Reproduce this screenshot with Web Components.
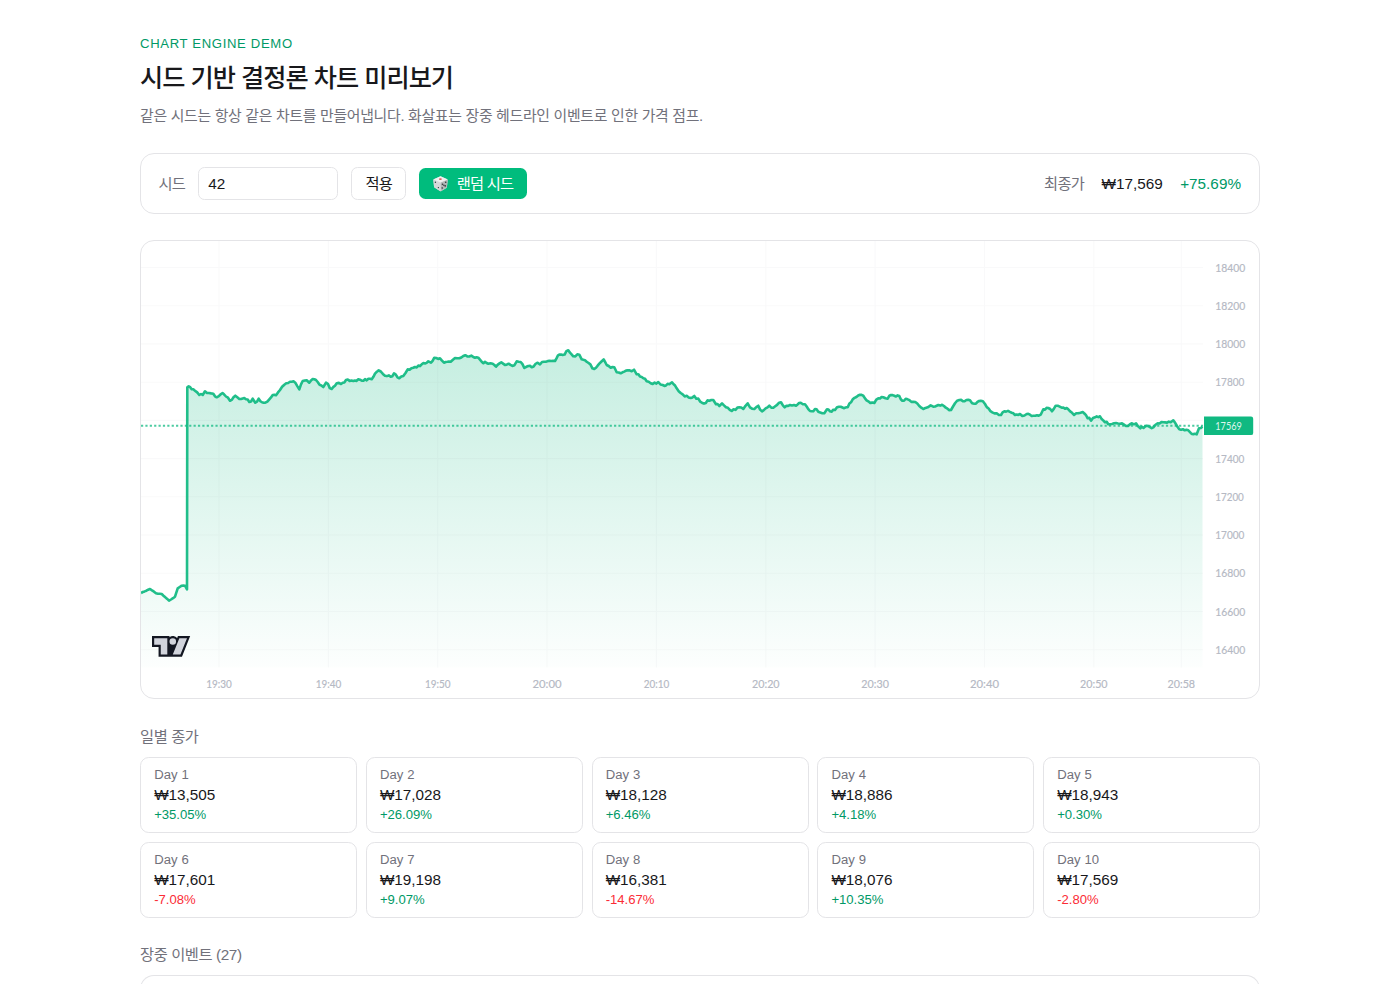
<!DOCTYPE html>
<html lang="ko">
<head>
<meta charset="utf-8">
<title>시드 기반 결정론 차트 미리보기</title>
<style>
    html {
        font-size: 17.5px;
    }

    body {
        margin: 0;
        background: #fff;
        color: #18181b;
        font-family: "Liberation Sans", "Noto Sans CJK KR", sans-serif;
        height: 984px;
        overflow: hidden;
        --line: #e4e4e7;
        --muted: #71717b;
        --up: #009966;
        --down: #fb2c36;
        --accent: #00bc7d;
    }
</style>
</head>
<body>
<chart-demo></chart-demo>

<script>

function attach(element, markup) {
    const template = document.createElement("template");
    template.innerHTML = markup;
    element.attachShadow({mode: "open"}).appendChild(template.content.cloneNode(true));
}

/* rounded, bordered box */

class PanelCard extends HTMLElement {
    constructor() {
        super();
        attach(this, `<style>
            :host {
                display: block;
                box-sizing: border-box;
                border: 1px solid var(--line);
                border-radius: var(--panel-radius, 14px);
                background: #fff;
                overflow: hidden;
            }
        </style><slot></slot>`);
    }
}

class PageHeading extends HTMLElement {
    constructor() {
        super();
        attach(this, `<style>
            :host { display: block; white-space: nowrap; }
            .eyebrow {
                font-size: 0.75rem;
                line-height: 1rem;
                letter-spacing: 0.66px;
                color: var(--up);
            }
            h1 {
                margin: 0.5rem 0 0;
                font-size: 25.2px;
                line-height: 2rem;
                font-weight: 500;
                letter-spacing: -0.95px;
            }
            p {
                margin: 9.5px 0 -0.75px;
                font-size: 14.9px;
                line-height: 1.25rem;
                letter-spacing: -0.3px;
                color: var(--muted);
            }
        </style>
        <div class="eyebrow"><slot name="eyebrow"></slot></div>
        <h1><slot name="title"></slot></h1>
        <p><slot></slot></p>`);
    }
}

class SectionTitle extends HTMLElement {
    constructor() {
        super();
        attach(this, `<style>
            :host {
                display: block;
                margin-bottom: 0.5rem;
                font-size: 0.875rem;
                line-height: 1.25rem;
                letter-spacing: -0.4px;
                color: var(--muted);
                white-space: nowrap;
            }
        </style><slot></slot>`);
    }
}

class SeedToolbar extends HTMLElement {
    constructor() {
        super();
        attach(this, `<style>
            :host {
                display: flex;
                align-items: center;
                gap: 0.75rem;
                height: 59px;
                padding: 0 18px 0 17.5px;
                font-size: 0.875rem;
                line-height: 1.25rem;
                white-space: nowrap;
            }
            .ko { letter-spacing: -0.8px; }
            label, .caption { color: var(--muted); }
            input, button {
                box-sizing: border-box;
                margin: 0;
                font: inherit;
                color: inherit;
                border-radius: 6.5px;
            }
            input {
                width: 8rem;
                height: 33px;
                padding: 0 9px;
                border: 1px solid var(--line);
                background: #fff;
                outline: none;
            }
            button {
                display: flex;
                align-items: center;
                justify-content: center;
                padding: 0;
            }
            .apply {
                width: 55px;
                height: 33px;
                border: 1px solid var(--line);
                background: #fff;
            }
            .random {
                width: 108px;
                height: 31px;
                padding-right: 2px;
                gap: 8px;
                border: 0;
                background: var(--accent);
                color: #fff;
            }
            .random svg { width: 17px; height: 17px; flex: none; }
            .result {
                display: flex;
                gap: 1rem;
                margin-left: auto;
            }
            .change { color: var(--up); }
        </style>
        <label class="ko" for="seed">시드</label>
        <input id="seed" value="42">
        <button class="apply ko">적용</button>
        <button class="random ko">
            <svg viewBox="0 0 17 17" aria-hidden="true">
                <path d="M8.5 1.2 15 4.1Q15.8 4.5 15.7 5.4L14.9 12Q14.8 12.8 14.1 13.2L9.4 16Q8.6 16.4 7.8 15.9L2.8 12.8Q2.1 12.4 2 11.6L1.3 5.2Q1.2 4.4 2 4.1Z" fill="#d7d9da"/>
                <path d="M8.5 7.6 15.7 4.8 14.9 12.3 8.6 16.2Z" fill="#b3b7b8"/>
                <path d="M1.4 4.6 8.5 7.6 8.6 16.2 2.1 12.3Z" fill="#d6d8d9"/>
                <path d="M8.5 1.2 15.4 4.4 8.5 7.5 1.7 4.4Z" fill="#f0f0f0"/>
                <ellipse cx="8.4" cy="4.1" rx="1.5" ry="0.9" fill="#df5b5b"/>
                <g fill="#303638">
                    <circle cx="3.4" cy="7.2" r="0.7"/><circle cx="6.4" cy="12.6" r="0.7"/>
                    <circle cx="13.7" cy="7.3" r="0.8"/><circle cx="10.2" cy="13" r="0.8"/>
                    <circle cx="13.2" cy="10.9" r="0.8"/><circle cx="10.5" cy="9.3" r="0.8"/><circle cx="11.9" cy="10.2" r="0.7"/>
                </g>
            </svg>
            <span>랜덤 시드</span>
        </button>
        <div class="result">
            <span class="caption ko">최종가</span>
            <span class="price"></span>
            <span class="change"></span>
        </div>`);
        this.shadowRoot.querySelector(".price").textContent = this.getAttribute("price");
        this.shadowRoot.querySelector(".change").textContent = this.getAttribute("change");
    }
}

/* knots of the price curve, x y pairs */

const curve = `141 593 150 589 156 593.3 161.7 594 169 600.7 175 596.7 177.7 588.3 181.7 585.7 185 585.7 187 589.3
187.3 387.3 188.7 386.3 191.7 389.3 195 390.7 199.3 395 202.7 395 205 391.3 209 393 213.3 393.7 216.7 397.3 221 394
224 394.3 230 400.7 235.3 395.7 239.3 399 246 399.3 249.3 402 252.7 398.7 255.3 402.7 258.7 398.7 262 402.3 265.3 402.7
269.3 399.3 272.7 395 276 395.3 280 390 284.3 384.7 290 381.7 295.3 382.7 299.3 389.3 302.7 381 306.7 380.3 309.3 382.7
312.7 379 317.7 382 323.3 387 326 382.7 331.7 389 336.7 383.3 341 384 346 380 353.3 381 360 379.7 366.7 380.3
371.7 379.3 375 373.7 378.7 370.3 385 375.7 390.7 376.7 394 373.3 399.3 378.3 403.3 376 407.7 369.3 413.3 367.8
421.7 364.3 428.3 361.3 431 362.7 434.3 357.7 440 358.3 444 362.7 450.7 361.7 455 358 459.3 358.3 463.3 356 473.3 357
478.3 357.7 481.7 361.7 488.3 363.7 492.7 363.7 496 366.7 501.3 362.3 506.7 364.7 514.3 365.3 516.7 361.3 520.7 362
524.3 368 528.3 366 531.7 367.3 537.3 362.7 540 364.3 544 361.7 555 361 558 355.3 562.7 355 568.3 350.3 573.3 356.3
579.3 354.7 581.7 359.3 586.7 361.7 594.3 369 599.3 363.7 603.7 359.3 606.7 365 610.7 367.7 614.3 367.3 616.7 372.3
620.7 373.3 627.7 370.3 631.7 371.3 634 369.7 636.7 374.3 641.7 377 646.7 381.3 652.7 384 658.3 382 662.7 385
669.3 384.3 672 382.3 676.7 388.3 682.7 394.3 690.7 398 694.3 396 702.3 403 709.3 400.7 713.3 400 716 404.3 719.3 406
722 403.3 726 407.3 731.7 411 739.3 407.3 743.3 409 747.7 403.3 750 407.3 754.3 409 758.3 405.7 762 411.3 769.3 405.7
773.3 407.7 781 402.3 784.7 407.3 790 405 796 405.7 800.7 402.7 805 404.3 810 411 813.3 411.3 815 409 818.3 411.7
824.3 413.3 827 409.3 830 411.3 835 410 839 406.7 847.7 407.3 852.7 399.3 860 394.7 863.3 395.7 868.3 401.3 874.3 403
878.3 398.3 883.3 397.3 887.7 398.7 891 395 899.3 396 902.3 400.7 905.7 398.7 913.3 401.7 923.3 409 927.7 407.3
930.7 405.3 933.3 406.7 938.3 405 944 406 951 410 955 403.3 959.3 400 970 400.3 974.3 403.7 980.7 400.7 985 404
992.3 412.3 996.7 413.3 1001 415 1004.3 411.3 1011.7 412.7 1015 415 1020 414 1022.3 416 1026.7 414 1033.3 415.7
1040.7 414.7 1043.3 409.3 1048.3 408 1052 411.3 1055.7 405.7 1061.7 407.7 1068.3 409.3 1074 415 1078.3 413.3
1082.7 412 1091 420.7 1095 417.3 1100 416.3 1105 422.3 1110 424.3 1120 423.7 1126 426 1136 423.3 1140.3 428.3
1146.7 425.7 1153.3 427.3 1157.7 423.3 1163.3 422.3 1170.7 422.3 1173.3 420.3 1179.3 429.3 1188.3 430.3 1191.7 434
1196.7 434.3 1199 428.3 1202.5 426.7`.split(/\s+/).map(Number);

/* one tick every 10 seconds is 1.82px; ticks between knots wobble a little */

function buildLine(knots) {
    let seed = 42;
    const random = () => (seed = (seed * 16807) % 2147483647) / 2147483647;
    let d = `M${knots[0]} ${knots[1]}`;
    for (let i = 2; i < knots.length; i += 2) {
        const [x0, y0, x1, y1] = knots.slice(i - 2, i + 2);
        const steps = Math.max(1, Math.round((x1 - x0) / 1.82));
        for (let s = 1; s < steps; s++) {
            const wobble = x0 < 187 ? 0.4 : 2.4;
            const y = y0 + (y1 - y0) * s / steps + (random() - 0.5) * wobble;
            d += `L${(x0 + (x1 - x0) * s / steps).toFixed(1)} ${y.toFixed(1)}`;
        }
        d += `L${x1} ${y1}`;
    }
    return d;
}

class PriceChart extends HTMLElement {
    constructor() {
        super();
        const times = [[219, "19:30"], [328.4, "19:40"], [437.7, "19:50"], [547, "20:00"], [656.4, "20:10"],
            [765.8, "20:20"], [875.1, "20:30"], [984.5, "20:40"], [1093.8, "20:50"], [1181.3, "20:58"]];
        let grid = "";
        let labels = "";
        for (const [x, text] of times) {
            const width = text.startsWith("19") ? 25.5 : text === "20:00" || text === "20:40" ? 29 : text === "20:10" ? 25.5 : 27.5;
            grid += `M${x} 241V667.5`;
            labels += `<text x="${x - width / 2}" y="687.7" textLength="${width}" lengthAdjust="spacingAndGlyphs">${text}</text>`;
        }
        for (let price = 18400, y = 267.5; price >= 16400; price -= 200, y += 38.22) {
            grid += `M141 ${y.toFixed(1)}H1203`;
            if (price !== 17600) {
                const width = price === 17200 ? 28.5 : price === 17000 || price === 17400 || price === 17800 ? 29 : 30;
                labels += `<text x="1215.3" y="${(y + 4).toFixed(1)}" textLength="${width}" lengthAdjust="spacingAndGlyphs">${price}</text>`;
            }
        }
        const line = buildLine(curve);
        attach(this, `<style>
            :host { display: block; height: 457px; }
            svg { display: block; width: 100%; height: 100%; }
            text { font-family: Lato, sans-serif; font-size: 11.5px; fill: #b5b9c4; stroke: #b5b9c4; stroke-width: 0.2px; }
            .tag { fill: #dff5ed; stroke: none; }
        </style>
        <svg viewBox="141 241 1118 457" preserveAspectRatio="none">
            <defs>
                <linearGradient id="fade" gradientUnits="userSpaceOnUse" x1="0" y1="350" x2="0" y2="668">
                    <stop offset="0" stop-color="#10b981" stop-opacity="0.24"/>
                    <stop offset="1" stop-color="#10b981" stop-opacity="0.01"/>
                </linearGradient>
            </defs>
            <path d="${line}V667.5H141Z" fill="url(#fade)"/>
            <path d="${grid}" fill="none" stroke="#71717b" stroke-opacity="0.04" stroke-width="1.1"/>
            <path d="M141 425.8H1203" stroke="#10b981" stroke-opacity="0.75" stroke-width="1.9" stroke-dasharray="2.19 2.19"/>
            <path d="${line}" fill="none" stroke="#10b981" stroke-opacity="0.93" stroke-width="2.6" stroke-linejoin="round"/>
            ${labels}
            <path d="M1204 416.5h47a2.2 2.2 0 0 1 2.2 2.2v14.2a2.2 2.2 0 0 1-2.2 2.2h-47Z" fill="#10b981"/>
            <text class="tag" x="1215.3" y="429.9" textLength="26.5" lengthAdjust="spacingAndGlyphs">17569</text>
            <g transform="translate(152 636) scale(1.09375)">
                <path fill="#131722" d="M0 0H16V1.1A5 5 0 0 1 23 1.9L23.7 0H34.9L27.4 19H6V10H0Z"/>
                <path fill="#d1d4dc" d="M14 2H2v6h6v9h6V2Zm12 15h-7l6-15h7l-6 15Zm-7-9a3 3 0 1 0 0-6 3 3 0 0 0 0 6Z"/>
            </g>
        </svg>`);
    }
}

class DayCard extends HTMLElement {
    constructor() {
        super();
        attach(this, `<style>
            :host { display: block; --panel-radius: 8.75px; }
            .body { padding: 0.5rem 0.75rem; white-space: nowrap; }
            .small { font-size: 0.75rem; line-height: 1rem; }
            .day { color: var(--muted); letter-spacing: 0.1px; }
            .price { font-size: 0.875rem; line-height: 1.25rem; }
            .change { color: var(--up); }
            :host([down]) .change { color: var(--down); }
        </style>
        <panel-card><div class="body">
            <div class="small day"><slot name="day"></slot></div>
            <div class="price"><slot name="price"></slot></div>
            <div class="small change"><slot name="change"></slot></div>
        </div></panel-card>`);
    }
}

const days = [
    ["₩13,505", "+35.05%"],
    ["₩17,028", "+26.09%"],
    ["₩18,128", "+6.46%"],
    ["₩18,886", "+4.18%"],
    ["₩18,943", "+0.30%"],
    ["₩17,601", "-7.08%"],
    ["₩19,198", "+9.07%"],
    ["₩16,381", "-14.67%"],
    ["₩18,076", "+10.35%"],
    ["₩17,569", "-2.80%"],
];

class ChartDemo extends HTMLElement {
    constructor() {
        super();
        const cards = days.map(([price, change], i) =>
            `<day-card${change.startsWith("-") ? " down" : ""}>
                <span slot="day">Day ${i + 1}</span>
                <span slot="price">${price}</span>
                <span slot="change">${change}</span>
            </day-card>`).join("");
        attach(this, `<style>
            :host {
                display: flex;
                flex-direction: column;
                gap: 1.5rem;
                box-sizing: border-box;
                width: 64rem;
                height: 984px;
                margin: 0 auto;
                padding-top: 2rem;
                overflow: hidden;
            }
            :host > * { flex: none; }
            .days {
                display: grid;
                grid-template-columns: repeat(5, 1fr);
                gap: 0.5rem;
            }
            .daily { padding-top: 0.3px; }
            .events {
                height: 20px;
                border-bottom: 0;
                border-bottom-left-radius: 0;
                border-bottom-right-radius: 0;
            }
        </style>
        <page-heading>
            <span slot="eyebrow">CHART ENGINE DEMO</span>
            <span slot="title">시드 기반 결정론 차트 미리보기</span>
            같은 시드는 항상 같은 차트를 만들어냅니다. 화살표는 장중 헤드라인 이벤트로 인한 가격 점프.
        </page-heading>
        <panel-card><seed-toolbar price="₩17,569" change="+75.69%"></seed-toolbar></panel-card>
        <panel-card><price-chart></price-chart></panel-card>
        <section class="daily">
            <section-title>일별 종가</section-title>
            <div class="days">${cards}</div>
        </section>
        <section>
            <section-title>장중 이벤트 (27)</section-title>
            <panel-card class="events"></panel-card>
        </section>`);
    }
}

customElements.define("panel-card", PanelCard);
customElements.define("page-heading", PageHeading);
customElements.define("section-title", SectionTitle);
customElements.define("seed-toolbar", SeedToolbar);
customElements.define("price-chart", PriceChart);
customElements.define("day-card", DayCard);
customElements.define("chart-demo", ChartDemo);

</script>
</body>
</html>
